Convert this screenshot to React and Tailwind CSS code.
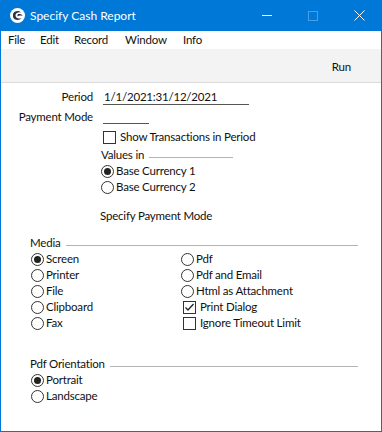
import React from 'react';

const Radio = ({ checked }) => (
    <span className="w-[13px] h-[13px] rounded-full border border-[#333] bg-white flex items-center justify-center shrink-0">
        {checked && <span className="w-[7px] h-[7px] rounded-full bg-[#222]" />}
    </span>
);

const Check = ({ checked }) => (
    <span className="w-[13px] h-[13px] border border-[#333] bg-white flex items-center justify-center shrink-0">
        {checked && (
            <svg width="11" height="11" viewBox="0 0 11 11">
                <path d="M1.5 5.5 L4 8 L9.5 2" fill="none" stroke="#222" strokeWidth="1.3" />
            </svg>
        )}
    </span>
);

const RadioRow = ({ checked, label, className = '' }) => (
    <div className={`flex items-center h-[16px] ${className}`}>
        <Radio checked={checked} />
        <span className="ml-[2px]">{label}</span>
    </div>
);

const CheckRow = ({ checked, label, className = '' }) => (
    <div className={`flex items-center h-[16px] ${className}`}>
        <Check checked={checked} />
        <span className="ml-[4px]">{label}</span>
    </div>
);

const GroupTitle = ({ label, className = '' }) => (
    <div className={`flex items-center h-[16px] pl-[29px] pr-[23px] ${className}`}>
        <span>{label}</span>
        <span className="flex-1 h-px bg-[#b4b4b4] ml-[5px] mt-[5px]" />
    </div>
);

export default function App() {
    return (
        <div
            className="w-[382px] h-[432px] flex flex-col border-x border-b border-[#0078d7] bg-white text-[11.5px] tracking-[-0.2px] leading-[16px] text-[#111]"
            style={{ fontFamily: '"Segoe UI", Lato, "Noto Sans", sans-serif' }}
        >
            {/* Title bar */}
            <div className="h-[31px] bg-[#0078d7] flex items-center text-white -mx-px">
                <svg className="ml-[10px]" width="15" height="15" viewBox="0 0 15 15">
                    <circle cx="7.5" cy="7.5" r="7.5" fill="#fff" />
                    <path d="M3 6 C4 2.5 9 2 11.5 4.5 C9 3.8 6 4.5 5.5 7 C5.2 9.5 8 11.5 11.8 10 C9.5 13 4 12.5 3 9 Z" fill="#26364a" />
                    <path d="M7.5 6.5 C9 5.5 12 6 12.5 8 C10.5 7.2 9 7.5 7.5 8.5 Z" fill="#26364a" />
                </svg>
                <span className="ml-[5px] text-[12px] tracking-normal">Specify Cash Report</span>
                <div className="ml-auto flex h-full">
                    <div className="w-[46px] flex items-center justify-center">
                        <span className="w-[10px] h-px bg-white" />
                    </div>
                    <div className="w-[46px] flex items-center justify-center">
                        <span className="w-[10px] h-[10px] border border-[#4c9ee2]" />
                    </div>
                    <div className="w-[46px] flex items-center justify-center">
                        <svg width="11" height="11" viewBox="0 0 11 11">
                            <path d="M0.5 0.5 L10.5 10.5 M10.5 0.5 L0.5 10.5" stroke="#fff" strokeWidth="1" />
                        </svg>
                    </div>
                </div>
            </div>

            {/* Menu bar */}
            <div className="h-[18px] flex items-center bg-white">
                <span className="ml-[7px] w-[32px]">File</span>
                <span className="w-[34px]">Edit</span>
                <span className="w-[51px]">Record</span>
                <span className="w-[58px]">Window</span>
                <span>Info</span>
            </div>

            {/* Toolbar */}
            <div className="h-[34px] bg-[#f3f3f3] border-b border-[#dcdcdc] flex items-center justify-end pr-[30px] pt-[2px]">
                <span>Run</span>
            </div>

            {/* Form */}
            <div className="flex-1 flex flex-col pt-[6px]">
                <div className="flex h-[16px]">
                    <span className="w-[92px] text-right">Period</span>
                    <span className="ml-[10px] w-[146px] h-[16px] border-b border-[#555] pl-[1px] box-border">1/1/2021:31/12/2021</span>
                </div>
                <div className="flex h-[16px] mt-[4px]">
                    <span className="w-[92px] text-right">Payment Mode</span>
                    <span className="ml-[10px] w-[46px] h-[15px] border-b border-[#555] box-border" />
                </div>
                <CheckRow checked={false} label="Show Transactions in Period" className="ml-[102px] mt-[4px]" />
                <div className="flex items-center h-[16px] ml-[100px] mt-[2px]">
                    <span>Values in</span>
                    <span className="w-[84px] h-px bg-[#b4b4b4] ml-[5px] mt-[5px]" />
                </div>
                <RadioRow checked label="Base Currency 1" className="ml-[100px]" />
                <RadioRow checked={false} label="Base Currency 2" className="ml-[100px]" />
                <div className="ml-[99px] mt-[13px] h-[16px]">Specify Payment Mode</div>

                <GroupTitle label="Media" className="mt-[11px]" />
                <div className="flex">
                    <div className="flex flex-col ml-[30px] w-[150px]">
                        <RadioRow checked label="Screen" />
                        <RadioRow checked={false} label="Printer" />
                        <RadioRow checked={false} label="File" />
                        <RadioRow checked={false} label="Clipboard" />
                        <RadioRow checked={false} label="Fax" />
                    </div>
                    <div className="flex flex-col">
                        <RadioRow checked={false} label="Pdf" />
                        <RadioRow checked={false} label="Pdf and Email" />
                        <RadioRow checked={false} label="Html as Attachment" />
                        <CheckRow checked label="Print Dialog" className="ml-[2px]" />
                        <CheckRow checked={false} label="Ignore Timeout Limit" className="ml-[2px]" />
                    </div>
                </div>

                <GroupTitle label="Pdf Orientation" className="mt-[25px]" />
                <div className="flex flex-col ml-[30px]">
                    <RadioRow checked label="Portrait" />
                    <RadioRow checked={false} label="Landscape" />
                </div>
            </div>
        </div>
    );
}
